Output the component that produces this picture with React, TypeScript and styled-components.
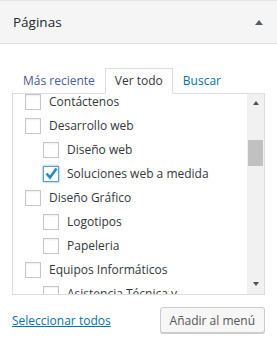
import { useLayoutEffect, useRef } from 'react';
import styled, { createGlobalStyle } from 'styled-components';

interface PageItem {
  title: string;
  checked?: boolean;
  children?: PageItem[];
}

const pages: PageItem[] = [
  { title: 'Inicio' },
  { title: 'Blog' },
  { title: 'Contáctenos' },
  {
    title: 'Desarrollo web',
    children: [{ title: 'Diseño web' }, { title: 'Soluciones web a medida', checked: true }],
  },
  {
    title: 'Diseño Gráfico',
    children: [{ title: 'Logotipos' }, { title: 'Papeleria' }],
  },
  {
    title: 'Equipos Informáticos',
    children: [{ title: 'Asistencia Técnica y reparación de ordenadores' }],
  },
];

const tabs = ['Más reciente', 'Ver todo', 'Buscar'];

const PageTree = ({ items, level }: { items: PageItem[]; level: number }) => (
  <Tree $level={level}>
    {items.map((item) => (
      <li key={item.title}>
        <Row>
          <Check $checked={!!item.checked}>
            {item.checked && (
              <svg width="16" height="16" viewBox="0 0 16 16">
                <polyline
                  points="3.5,7.5 7,11.5 13.5,2.5"
                  fill="none"
                  stroke="#1e8cbe"
                  strokeWidth="2.6"
                  strokeLinejoin="miter"
                />
              </svg>
            )}
          </Check>
          <Label>{item.title}</Label>
        </Row>
        {item.children && <PageTree items={item.children} level={level + 1} />}
      </li>
    ))}
  </Tree>
);

const App = () => {
  const listRef = useRef<HTMLDivElement>(null);

  useLayoutEffect(() => {
    if (listRef.current) listRef.current.scrollTop = 52;
  }, []);

  return (
    <>
      <GlobalStyle />
      <Wrapper>
        <Header>
          <Title>Páginas</Title>
          <Arrow />
        </Header>
        <Body>
          <Tabs>
            {tabs.map((tab, idx) => (
              <Tab key={tab} $active={tab === 'Ver todo'} $visited={idx === 0}>
                {tab}
              </Tab>
            ))}
          </Tabs>
          <Panel>
            <List ref={listRef}>
              <PageTree items={pages} level={0} />
            </List>
            <Scrollbar>
              <ScrollArrow $up />
              <Track>
                <Thumb />
              </Track>
              <ScrollArrow />
            </Scrollbar>
          </Panel>
          <Footer>
            <SelectAll href="#">Seleccionar todos</SelectAll>
            <AddButton type="button">Añadir al menú</AddButton>
          </Footer>
        </Body>
      </Wrapper>
    </>
  );
};

const GlobalStyle = createGlobalStyle`
  body {
    margin: 0;
    background: #fff;
    font-family: 'Open Sans', 'Noto Sans', sans-serif;
    color: #32373c;
  }
`;

const Wrapper = styled.div`
  width: 277px;
  height: 351px;
  overflow: hidden;
`;

const Header = styled.div`
  display: flex;
  align-items: center;
  justify-content: space-between;
  height: 42px;
  padding: 0 14px 0 13px;
  background: #f5f5f5;
  border-top: 1px solid #e5e5e5;
  border-bottom: 1px solid #dcdcdc;
`;

const Title = styled.h3`
  margin: 0;
  font-size: 13.5px;
  font-weight: 400;
  color: #23282d;
`;

const Arrow = styled.span`
  width: 0;
  height: 0;
  border-left: 4px solid transparent;
  border-right: 4px solid transparent;
  border-bottom: 5px solid #555d66;
`;

const Body = styled.div`
  padding: 24px 12px 0 12px;
`;

const Tabs = styled.div`
  display: flex;
  padding-left: 1px;
  position: relative;
  z-index: 1;
`;

const Tab = styled.span<{ $active: boolean; $visited: boolean }>`
  height: 24px;
  line-height: 24px;
  padding: 0 9px;
  font-size: 12px;
  white-space: nowrap;
  border: 1px solid ${(p) => (p.$active ? '#dddddd' : 'transparent')};
  border-bottom: 1px solid ${(p) => (p.$active ? '#fff' : 'transparent')};
  background: ${(p) => (p.$active ? '#fff' : 'transparent')};
  color: ${(p) => (p.$active ? '#32373c' : p.$visited ? '#4a5b94' : '#0073aa')};
`;

const Panel = styled.div`
  display: flex;
  height: 200px;
  margin-top: -1px;
  border: 1px solid #dddddd;
`;

const List = styled.div`
  flex: 1;
  overflow: hidden;
  padding: 0 16px 0 12px;
`;

const Tree = styled.ul<{ $level: number }>`
  list-style: none;
  margin: 0;
  padding: 0 0 0 ${(p) => (p.$level > 0 ? 18 : 0)}px;
`;

const Row = styled.label`
  display: flex;
  align-items: flex-start;
  gap: 8px;
  padding: 3px 0;
`;

const Check = styled.span<{ $checked: boolean }>`
  flex: none;
  box-sizing: border-box;
  width: 16px;
  height: 16px;
  margin-top: 1px;
  border: 1px solid ${(p) => (p.$checked ? '#5b9dd9' : '#c3c7cb')};
  background: #fff;
  box-shadow: ${(p) =>
    p.$checked ? '0 0 2px rgba(30, 140, 190, 0.8)' : 'inset 0 1px 2px rgba(0, 0, 0, 0.07)'};
  display: flex;
  align-items: center;
  justify-content: center;

  svg {
    margin: -1px;
  }
`;

const Label = styled.span`
  font-size: 12px;
  line-height: 18px;
  color: #32373c;
`;

const Scrollbar = styled.div`
  flex: none;
  width: 17px;
  display: flex;
  flex-direction: column;
  align-items: center;
  background: #f1f1f1;
`;

const ScrollArrow = styled.span<{ $up?: boolean }>`
  width: 0;
  height: 0;
  margin: ${(p) => (p.$up ? '7px 0 6px' : '6px 0 8px')};
  border-left: 3.5px solid transparent;
  border-right: 3.5px solid transparent;
  ${(p) => (p.$up ? 'border-bottom' : 'border-top')}: 4px solid #505050;
`;

const Track = styled.div`
  flex: 1;
  align-self: stretch;
  padding: 29px 1px 0 1px;
`;

const Thumb = styled.div`
  height: 26px;
  background: #c1c1c1;
`;

const Footer = styled.div`
  display: flex;
  align-items: center;
  justify-content: space-between;
  margin-top: 12px;
`;

const SelectAll = styled.a`
  font-size: 12px;
  color: #0073aa;
  text-decoration: underline;
`;

const AddButton = styled.button`
  height: 26px;
  padding: 0 9px;
  font-family: inherit;
  font-size: 12px;
  color: #555;
  background: #f7f7f7;
  border: 1px solid #cccccc;
  border-radius: 3px;
  box-shadow: 0 1px 0 #cccccc;
`;

export default App;
